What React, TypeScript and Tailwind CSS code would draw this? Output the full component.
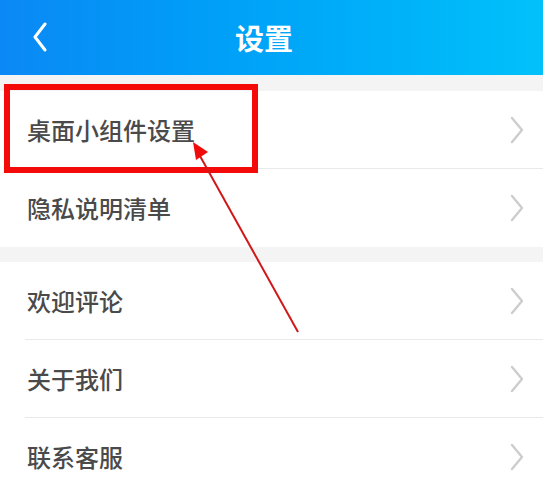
import React from "react";

const Chevron = () => (
  <svg width="16" height="28" viewBox="0 0 16 28" className="shrink-0">
    <path d="M3 2 L13 14 L3 26" fill="none" stroke="#cdcdcd" strokeWidth="2.4" strokeLinecap="round" strokeLinejoin="round" />
  </svg>
);

const Row = ({ label, divider }: { label: string; divider: boolean }) => (
  <div className="relative flex h-[78px] items-center justify-between bg-white pl-[27px] pr-[18px]">
    <span className="text-[24px] font-medium text-[#4a4a4a] leading-none">{label}</span>
    <Chevron />
    {divider && <div className="absolute bottom-0 left-[25px] right-0 h-px bg-[#e9e9e9]" />}
  </div>
);

export default function App() {
  return (
    <div
      className="relative h-[495px] w-[543px] overflow-hidden bg-white"
      style={{ fontFamily: '"Noto Sans CJK SC", "Noto Sans", sans-serif' }}
    >
      <header className="relative flex h-[75px] items-center justify-center bg-gradient-to-r from-[#0b88f5] to-[#02c1fa]">
        <svg width="16" height="30" viewBox="0 0 16 30" className="absolute left-[32px] top-[22px]">
          <path d="M13 2 L3 15 L13 28" fill="none" stroke="#ffffff" strokeWidth="3" strokeLinecap="round" strokeLinejoin="round" />
        </svg>
        <h1 className="mr-[15px] text-[29px] font-bold text-white leading-none">设置</h1>
      </header>
      <div className="h-[16px] bg-[#f4f4f4]" />
      <Row label="桌面小组件设置" divider />
      <Row label="隐私说明清单" divider={false} />
      <div className="h-[15px] bg-[#f4f4f4]" />
      <Row label="欢迎评论" divider />
      <Row label="关于我们" divider />
      <Row label="联系客服" divider={false} />

      {/* annotation overlay */}
      <div className="absolute left-[4px] top-[84px] h-[89px] w-[254px] border-[6px] border-[#f50a0a]" />
      <svg className="absolute left-0 top-0" width="543" height="495" viewBox="0 0 543 495">
        <line x1="298" y1="332" x2="200" y2="156" stroke="#d01818" strokeWidth="2" />
        <polygon points="193,142 208,152 196,160" fill="#f00a0a" />
      </svg>
    </div>
  );
}
